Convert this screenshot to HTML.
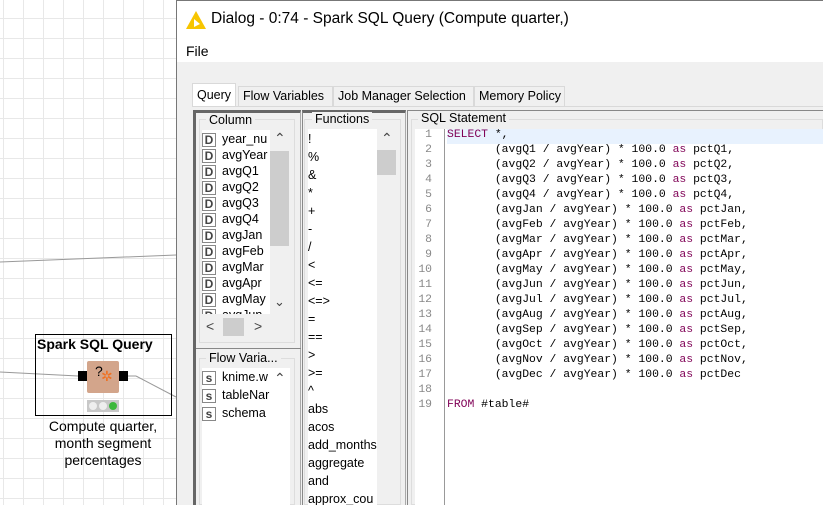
<!DOCTYPE html><html><head><style>
*{margin:0;padding:0;box-sizing:border-box}
body{width:823px;height:505px;overflow:hidden;position:relative;font-family:"Liberation Sans",sans-serif;font-size:12px;color:#000;
background-color:#fff;background-image:linear-gradient(#e8e8e8 1px,transparent 1px),linear-gradient(90deg,#e8e8e8 1px,transparent 1px);background-size:20px 20px;background-position:0 18px,3px 0}
.a{position:absolute}
.t{position:absolute;white-space:nowrap}
.sql{font-family:"Liberation Mono",monospace;font-size:11.4px;white-space:pre;position:absolute;left:447px;line-height:15px}
.kw{color:#7f0055}
.ln{position:absolute;left:417px;width:15px;text-align:right;font-family:"Liberation Mono",monospace;font-size:11.4px;color:#888;line-height:15px}
.d{display:inline-block;width:14px;height:14px;border:1px solid #888;font-weight:bold;font-size:12px;text-align:center;line-height:12px;margin-right:6px;vertical-align:middle;color:#444;background:#fff}
.tab{position:absolute;top:86px;height:20px;border:1px solid #d9d9d9;border-bottom:none;background:#f0f0f0;padding:2px 4px;font-size:12.5px;white-space:nowrap;overflow:hidden}
</style></head><body>
<svg class="a" style="left:0;top:0" width="180" height="505">
<line x1="0" y1="262" x2="176" y2="255" stroke="#999"/>
<line x1="0" y1="372" x2="78" y2="376" stroke="#999"/>
<line x1="128" y1="376" x2="136" y2="376" stroke="#999"/>
<line x1="136" y1="376" x2="176" y2="397" stroke="#999"/>
</svg>
<div class="a" style="left:35px;top:334px;width:137px;height:82px;border:1px solid #000"></div>
<div class="t" style="left:37px;top:336px;font-weight:bold;font-size:14px">Spark SQL Query</div>
<div class="a" style="left:87px;top:361px;width:32px;height:32px;background:#d3a58b;border-radius:2px"></div>
<div class="t" style="left:95px;top:363px;font-size:14px">?</div>
<div class="t" style="left:101px;top:368px;font-size:14px;color:#f07020">✲</div>
<div class="a" style="left:78px;top:371px;width:9px;height:10px;background:#000"></div>
<div class="a" style="left:119px;top:371px;width:9px;height:10px;background:#000"></div>
<div class="a" style="left:87px;top:400px;width:32px;height:12px;background:#c8c8c8"></div>
<div class="a" style="left:89px;top:402px;width:8px;height:8px;border-radius:4px;background:#eee"></div>
<div class="a" style="left:99px;top:402px;width:8px;height:8px;border-radius:4px;background:#eee"></div>
<div class="a" style="left:109px;top:402px;width:8px;height:8px;border-radius:4px;background:#3cb83c"></div>
<div class="a" style="left:20px;top:418px;width:166px;text-align:center;font-size:14px;line-height:17px">Compute quarter,<br>month segment<br>percentages</div>

<div class="a" style="left:176px;top:0;width:647px;height:505px;background:#f0f0f0;border-left:1px solid #777;border-top:1px solid #777"></div>
<div class="a" style="left:177px;top:1px;width:646px;height:61px;background:#fff"></div>
<svg class="a" style="left:186px;top:11px" width="20" height="18"><polygon points="10,0 20,18 0,18" fill="#f7c500"/><polygon points="8,8 14,13 8,16" fill="#fff"/></svg>
<div class="t" style="left:211px;top:10px;font-size:15.5px">Dialog - 0:74 - Spark SQL Query (Compute quarter,)</div>
<div class="t" style="left:186px;top:43px;font-size:14px">File</div>

<div class="tab" style="left:192px;top:83px;height:24px;background:#fff;padding-top:4px">Query</div>
<div class="tab" style="left:238px;width:95px">Flow Variables</div>
<div class="tab" style="left:333px;width:141px">Job Manager Selection</div>
<div class="tab" style="left:474px;width:91px">Memory Policy</div>
<div class="a" style="left:192px;top:106px;width:631px;height:399px;background:#f0f0f0;border-top:1px solid #d9d9d9"></div>

<div class="a" style="left:193px;top:110px;width:108px;height:395px;border-left:3px solid #666;border-top:3px solid #666;border-right:1px solid #aaa"></div>
<div class="a" style="left:199px;top:119px;width:96px;height:224px;border:1px solid #ddd"></div>
<div class="t" style="left:206px;top:113px;background:#f0f0f0;padding:0 3px;font-size:12.5px">Column</div>
<div class="a" style="left:202px;top:130px;width:68px;height:184px;background:#fff;overflow:hidden;line-height:16px;font-size:12.5px;padding-top:1px">
<div><span class="d">D</span>year_nu</div><div><span class="d">D</span>avgYear</div><div><span class="d">D</span>avgQ1</div><div><span class="d">D</span>avgQ2</div><div><span class="d">D</span>avgQ3</div><div><span class="d">D</span>avgQ4</div><div><span class="d">D</span>avgJan</div><div><span class="d">D</span>avgFeb</div><div><span class="d">D</span>avgMar</div><div><span class="d">D</span>avgApr</div><div><span class="d">D</span>avgMay</div><div><span class="d">D</span>avgJun</div></div>
<div class="t" style="left:274px;top:130px;font-size:14px;color:#444">&#8963;</div>
<div class="a" style="left:270px;top:151px;width:19px;height:95px;background:#cdcdcd"></div>
<div class="t" style="left:274px;top:294px;font-size:13px;color:#444">&#8964;</div>
<div class="t" style="left:206px;top:318px;font-size:14px;color:#444">&lt;</div>
<div class="a" style="left:223px;top:318px;width:21px;height:18px;background:#cdcdcd"></div>
<div class="t" style="left:254px;top:318px;font-size:14px;color:#444">&gt;</div>
<div class="a" style="left:196px;top:348px;width:105px;height:1px;background:#888"></div>
<div class="a" style="left:199px;top:358px;width:96px;height:147px;border:1px solid #ddd"></div>
<div class="t" style="left:206px;top:351px;background:#f0f0f0;padding:0 3px;font-size:12.5px">Flow Varia...</div>
<div class="a" style="left:202px;top:368px;width:88px;height:137px;background:#fff"></div>
<div class="a" style="left:202px;top:368px;width:68px;height:137px;background:#fff;overflow:hidden;line-height:18px;font-size:12.5px">
<div><span class="d">s</span>knime.w</div><div><span class="d">s</span>tableNar</div><div><span class="d">s</span>schema</div></div>
<div class="t" style="left:274px;top:370px;font-size:14px;color:#444">&#8963;</div>

<div class="a" style="left:302px;top:110px;width:104px;height:395px;border-left:1px solid #888;border-top:3px solid #666;border-right:1px solid #aaa"></div>
<div class="a" style="left:304px;top:119px;width:97px;height:386px;border:1px solid #ddd"></div>
<div class="t" style="left:312px;top:112px;background:#f0f0f0;padding:0 3px;font-size:12.5px">Functions</div>
<div class="a" style="left:308px;top:129px;width:69px;height:376px;background:#fff;overflow:hidden;line-height:18px;font-size:12.5px;padding-top:1px">
!<br>%<br>&amp;<br>*<br>+<br>-<br>/<br>&lt;<br>&lt;=<br>&lt;=&gt;<br>=<br>==<br>&gt;<br>&gt;=<br>^<br>abs<br>acos<br>add_months<br>aggregate<br>and<br>approx_cou</div>
<div class="t" style="left:381px;top:130px;font-size:14px;color:#444">&#8963;</div>
<div class="a" style="left:377px;top:150px;width:19px;height:25px;background:#cdcdcd"></div>

<div class="a" style="left:407px;top:110px;width:416px;height:395px;border-left:1px solid #888;border-top:1px solid #888"></div>
<div class="a" style="left:411px;top:119px;width:412px;height:386px;border:1px solid #ddd"></div>
<div class="t" style="left:418px;top:111px;background:#f0f0f0;padding:0 3px;font-size:12.5px">SQL Statement</div>
<div class="a" style="left:415px;top:129px;width:408px;height:376px;background:#fff"></div>
<div class="a" style="left:444px;top:129px;width:1px;height:376px;background:#999"></div>
<div class="a" style="left:447px;top:129px;width:376px;height:15px;background:#e8f2fe"></div>
<div class="ln" style="top:128px">1<br>2<br>3<br>4<br>5<br>6<br>7<br>8<br>9<br>10<br>11<br>12<br>13<br>14<br>15<br>16<br>17<br>18<br>19</div>
<div class="sql" style="top:128px"><span class="kw">SELECT</span> *,
       (avgQ1 / avgYear) * 100.0 <span class="kw">as</span> pctQ1,
       (avgQ2 / avgYear) * 100.0 <span class="kw">as</span> pctQ2,
       (avgQ3 / avgYear) * 100.0 <span class="kw">as</span> pctQ3,
       (avgQ4 / avgYear) * 100.0 <span class="kw">as</span> pctQ4,
       (avgJan / avgYear) * 100.0 <span class="kw">as</span> pctJan,
       (avgFeb / avgYear) * 100.0 <span class="kw">as</span> pctFeb,
       (avgMar / avgYear) * 100.0 <span class="kw">as</span> pctMar,
       (avgApr / avgYear) * 100.0 <span class="kw">as</span> pctApr,
       (avgMay / avgYear) * 100.0 <span class="kw">as</span> pctMay,
       (avgJun / avgYear) * 100.0 <span class="kw">as</span> pctJun,
       (avgJul / avgYear) * 100.0 <span class="kw">as</span> pctJul,
       (avgAug / avgYear) * 100.0 <span class="kw">as</span> pctAug,
       (avgSep / avgYear) * 100.0 <span class="kw">as</span> pctSep,
       (avgOct / avgYear) * 100.0 <span class="kw">as</span> pctOct,
       (avgNov / avgYear) * 100.0 <span class="kw">as</span> pctNov,
       (avgDec / avgYear) * 100.0 <span class="kw">as</span> pctDec

<span class="kw">FROM</span> #table#</div>
</body></html>
